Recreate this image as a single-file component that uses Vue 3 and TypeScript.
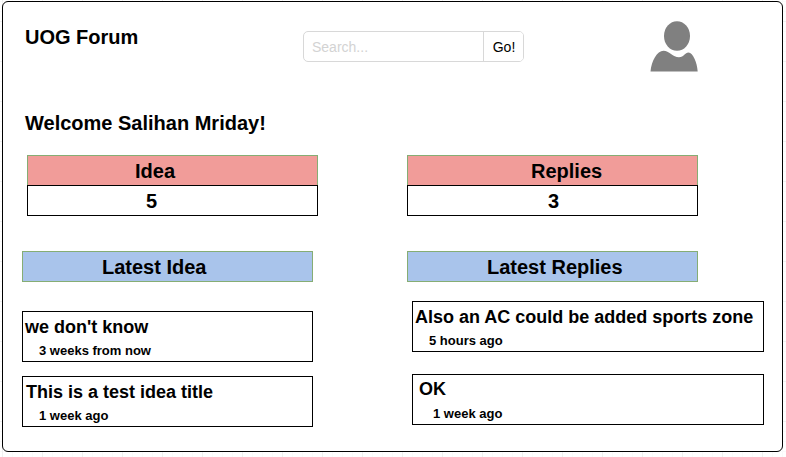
<script setup lang="ts">
interface Post {
  title: string
  time: string
}

interface Section {
  key: string
  label: string
  count: number
  latestLabel: string
  posts: Post[]
}

const sections: Section[] = [
  {
    key: 'ideas',
    label: 'Idea',
    count: 5,
    latestLabel: 'Latest Idea',
    posts: [
      { title: "we don't know", time: '3 weeks from now' },
      { title: 'This is a test idea title', time: '1 week ago' },
    ],
  },
  {
    key: 'replies',
    label: 'Replies',
    count: 3,
    latestLabel: 'Latest Replies',
    posts: [
      { title: 'Also an AC could be added sports zone', time: '5 hours ago' },
      { title: 'OK', time: '1 week ago' },
    ],
  },
]
</script>

<template>
  <div class="canvas">
    <main class="panel">
      <header class="header">
        <h1 class="brand">UOG Forum</h1>
        <form class="search" @submit.prevent>
          <input class="search-input" type="text" placeholder="Search..." />
          <button class="search-button" type="submit">Go!</button>
        </form>
        <svg class="avatar" width="48" height="51" viewBox="0 0 48 51">
          <ellipse cx="27" cy="15" rx="13" ry="14.8" />
          <path d="M0.5 50.5C1.5 40 7 29.8 13.5 29.8C19 29.8 23 36.2 29 36.2C34 36.2 35 31.5 38.5 31.5C43 32 47 41 47.7 50.5Z" />
        </svg>
      </header>

      <h2 class="welcome">Welcome Salihan Mriday!</h2>

      <div class="columns">
        <section v-for="section in sections" :key="section.key" class="column" :class="section.key">
          <div class="stat">
            <div class="stat-label">{{ section.label }}</div>
            <div class="stat-value">{{ section.count }}</div>
          </div>
          <h3 class="latest">{{ section.latestLabel }}</h3>
          <div class="posts">
            <article v-for="post in section.posts" :key="post.title" class="post">
              <div class="post-title">{{ post.title }}</div>
              <div class="post-time">{{ post.time }}</div>
            </article>
          </div>
        </section>
      </div>
    </main>
  </div>
</template>

<style>
body {
  margin: 0;
  background: #fff;
}
</style>

<style scoped>
.canvas,
.canvas * {
  box-sizing: border-box;
}

.canvas {
  width: 786px;
  height: 457px;
  padding: 1px 0 0 2px;
  overflow: hidden;
  font-family: "Liberation Sans", Arial, sans-serif;
  color: #000;
  background-color: #fff;
  background-image:
    linear-gradient(to right, #f0f0f0 1px, transparent 1px),
    linear-gradient(to bottom, #f0f0f0 1px, transparent 1px),
    linear-gradient(to right, #fafafa 1px, transparent 1px),
    linear-gradient(to bottom, #fafafa 1px, transparent 1px);
  background-size: 40px 40px, 40px 40px, 10px 10px, 10px 10px;
  background-position: 2px 21px, 2px 21px, 2px 1px, 2px 1px;
}

.panel {
  width: 781px;
  height: 451px;
  border: 1px solid #000;
  border-radius: 6px;
  background: #fff;
}

h1,
h2,
h3 {
  margin: 0;
  font-size: 20px;
  font-weight: bold;
}

.header {
  display: flex;
  align-items: flex-start;
  height: 106px;
  padding: 19px 0 0 22px;
}

.brand {
  width: 278px;
  padding-top: 4px;
  line-height: 24px;
}

.search {
  display: flex;
  width: 221px;
  height: 31px;
  margin: 10px 126px 0 0;
  border: 1px solid #d8d8d8;
  border-radius: 5px;
  overflow: hidden;
}

.search-input {
  width: 179px;
  padding: 0 8px;
  border: 0;
  outline: 0;
  background: transparent;
  font: 14px "Liberation Sans", Arial, sans-serif;
}

.search-input::placeholder {
  color: #d3d3d3;
  opacity: 1;
}

.search-button {
  flex: 1;
  padding: 0 0 0 1px;
  border: 0;
  border-left: 1px solid #d8d8d8;
  background: #fff;
  color: #000;
  font: 14px "Liberation Sans", Arial, sans-serif;
}

.avatar {
  flex: none;
  fill: #808080;
}

.welcome {
  height: 47px;
  padding: 3px 0 0 22px;
  line-height: 24px;
}

.columns {
  display: flex;
  padding-left: 19px;
}

.column {
  width: 385px;
}

.column.replies {
  width: 357px;
}

.stat,
.latest {
  width: 291px;
  font-size: 20px;
  font-weight: bold;
  line-height: 31px;
}

.stat {
  margin-bottom: 35px;
}

.ideas .stat {
  margin-left: 5px;
}

.stat-label {
  height: 30px;
  border: 1px solid #86ad74;
  border-bottom: 0;
  background: #f19c99;
}

.stat-value {
  height: 31px;
  border: 1px solid #000;
}

.latest {
  height: 31px;
  border: 1px solid #86ad74;
  background: #a9c4eb;
}

.ideas .stat-label {
  padding-left: 107px;
}

.ideas .stat-value {
  padding-left: 118px;
}

.ideas .latest {
  padding-left: 79px;
}

.replies .stat-label {
  padding-left: 123px;
}

.replies .stat-value {
  padding-left: 140px;
}

.replies .latest {
  padding-left: 79px;
}

.posts {
  display: flex;
  flex-direction: column;
  gap: 14px;
  width: 291px;
  margin-top: 29px;
}

.replies .posts {
  gap: 22px;
  width: 352px;
  margin: 19px 0 0 5px;
}

.post {
  height: 51px;
  padding: 3px 0 0 2px;
  border: 1px solid #000;
  font-weight: bold;
  white-space: nowrap;
}

.post-title {
  font-size: 18px;
  line-height: 24px;
}

.post-time {
  padding: 1px 0 0 14px;
  font-size: 13px;
  line-height: 22px;
}

.ideas .post:last-child .post-title {
  padding-left: 1px;
}

.replies .post:last-child {
  padding: 2px 0 0 6px;
}

.replies .post:last-child .post-time {
  padding-top: 2px;
}
</style>
